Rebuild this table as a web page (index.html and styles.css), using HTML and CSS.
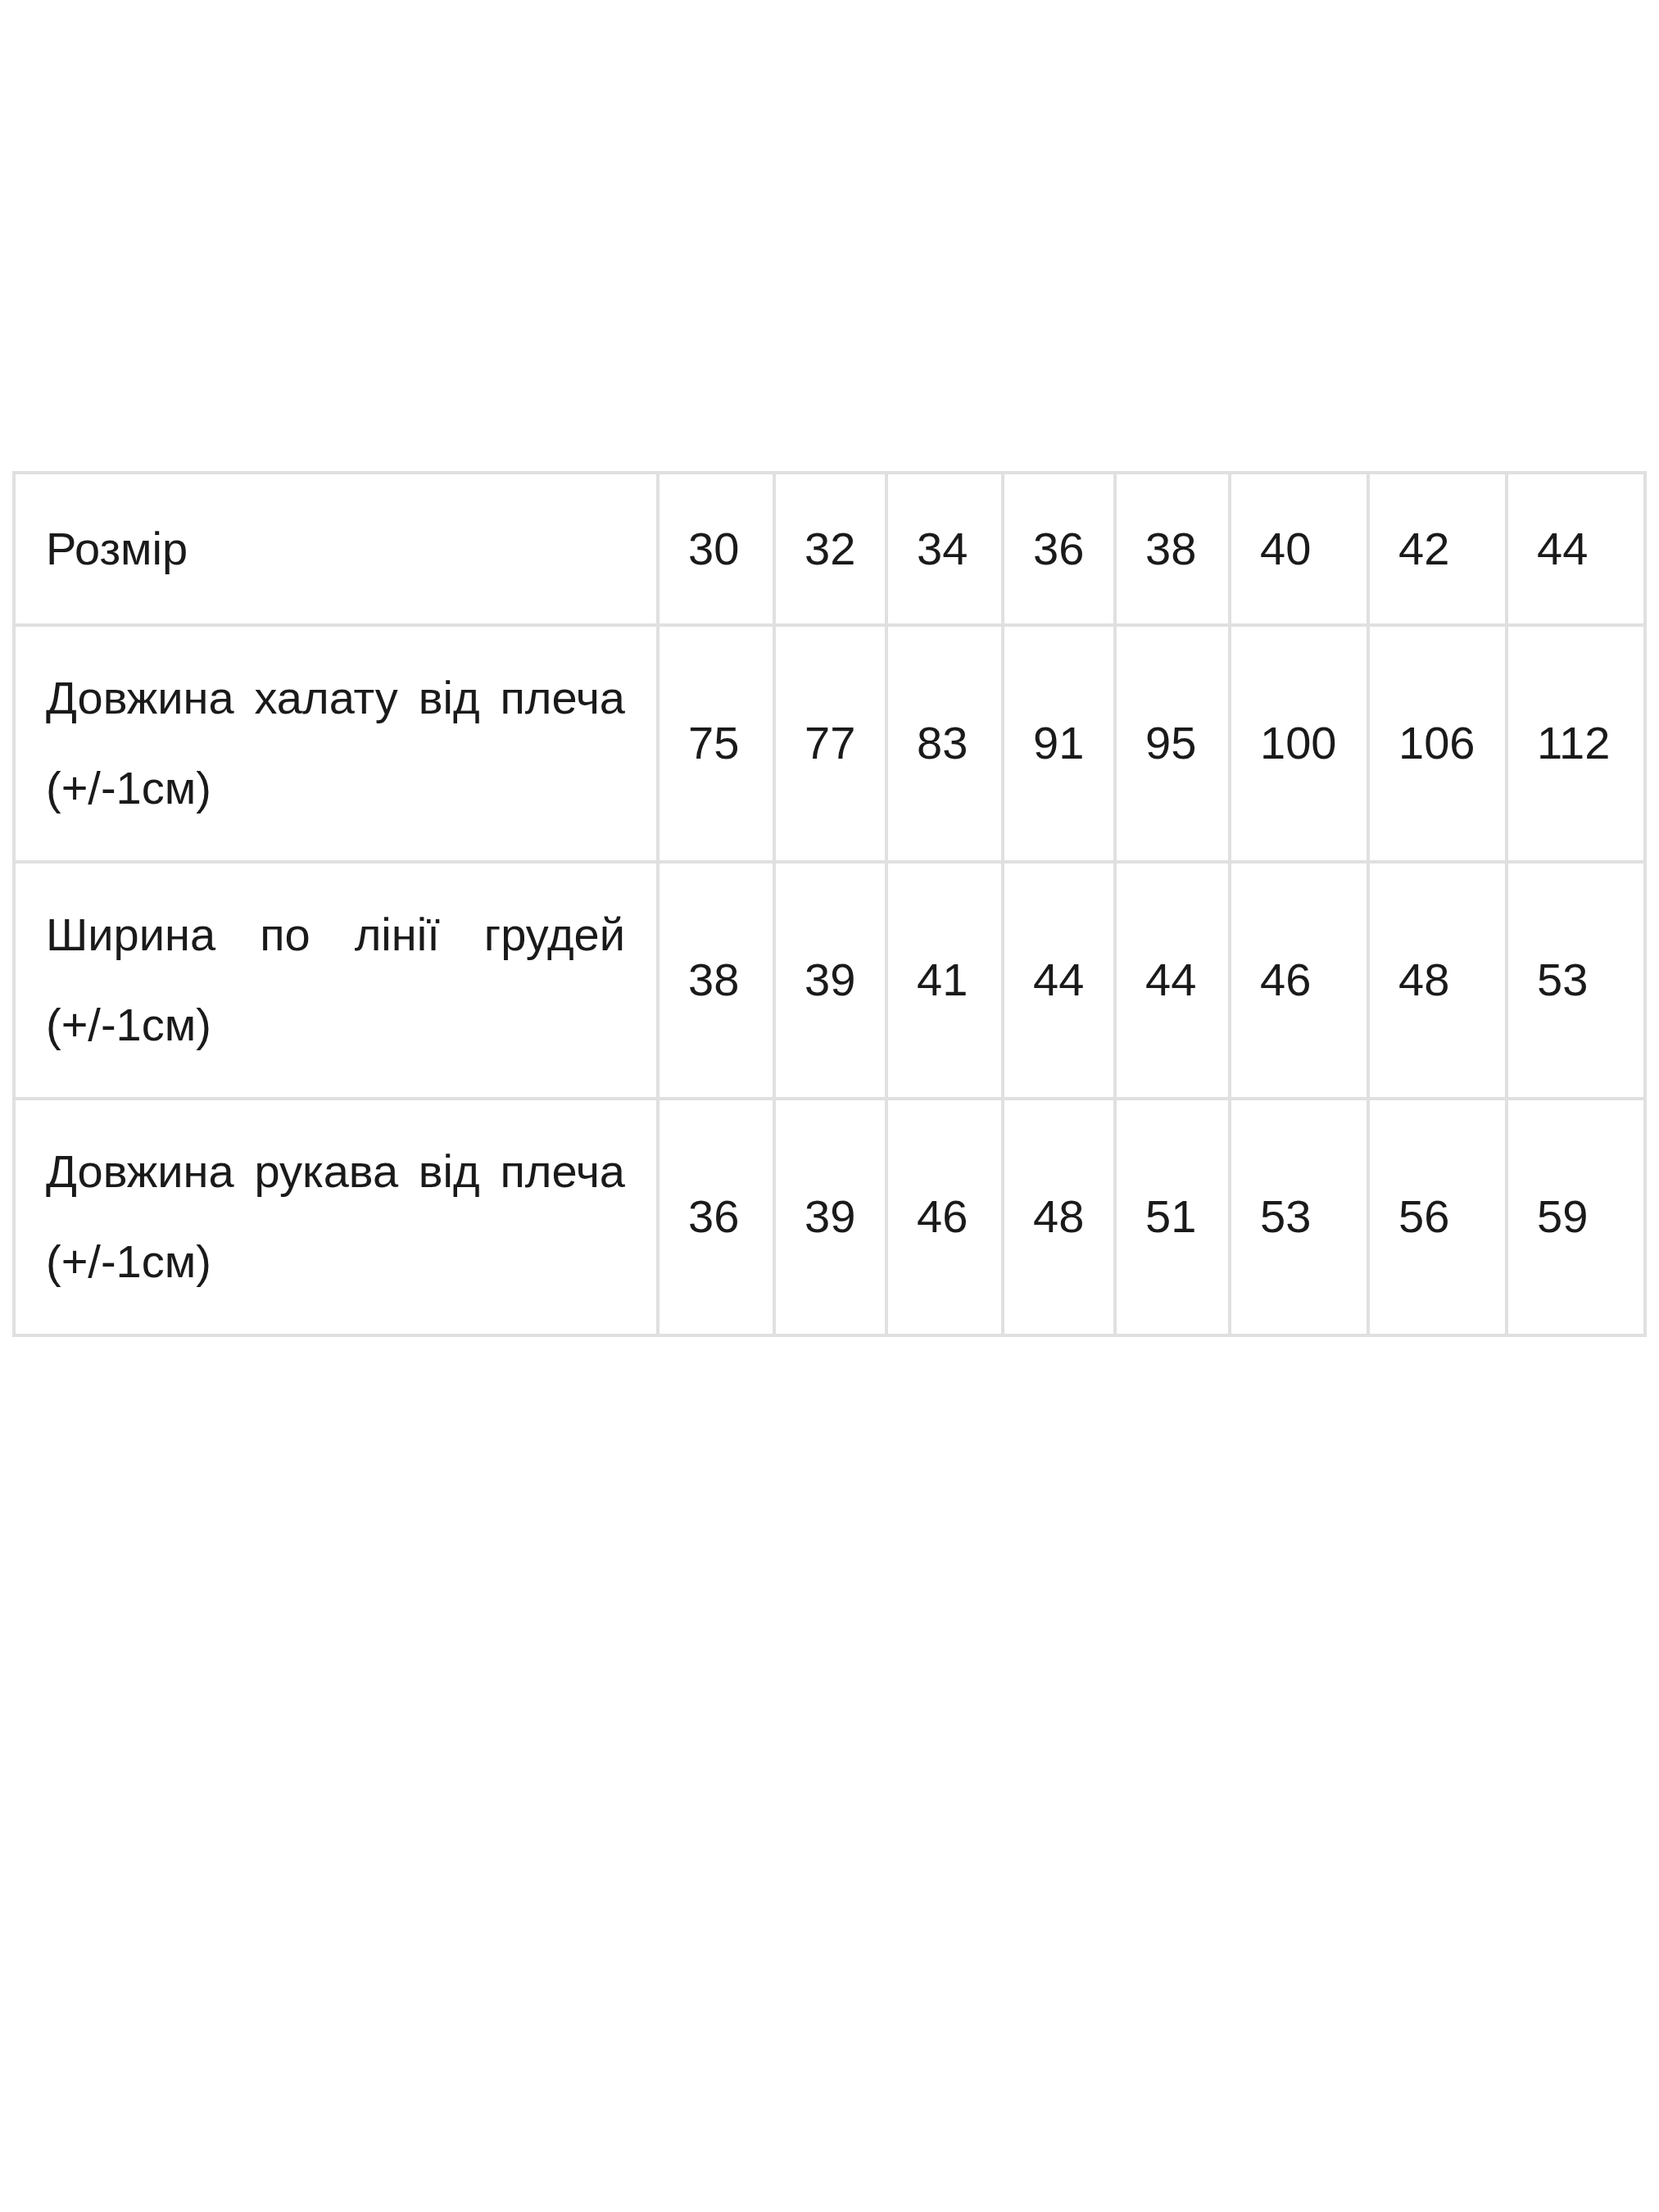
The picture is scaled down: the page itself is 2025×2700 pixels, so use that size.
FILE: index.html
```html
<!DOCTYPE html>
<html lang="uk">
<head>
<meta charset="utf-8">
<title>Розмірна сітка</title>
<link rel="stylesheet" href="styles.css">
</head>
<body>
<table class="size-table">
  <colgroup>
    <col class="c-label">
    <col class="c-a"><col class="c-b"><col class="c-a"><col class="c-b"><col class="c-c">
    <col class="c-d"><col class="c-d"><col class="c-d">
  </colgroup>
  <tbody>
    <tr class="r-head">
      <td class="label">Розмір</td>
      <td>30</td><td>32</td><td>34</td><td>36</td><td>38</td><td>40</td><td>42</td><td>44</td>
    </tr>
    <tr>
      <td class="label">Довжина халату від плеча (+/-1см)</td>
      <td>75</td><td>77</td><td>83</td><td>91</td><td>95</td><td>100</td><td>106</td><td>112</td>
    </tr>
    <tr>
      <td class="label">Ширина по лінії грудей (+/-1см)</td>
      <td>38</td><td>39</td><td>41</td><td>44</td><td>44</td><td>46</td><td>48</td><td>53</td>
    </tr>
    <tr>
      <td class="label">Довжина рукава від плеча (+/-1см)</td>
      <td>36</td><td>39</td><td>46</td><td>48</td><td>51</td><td>53</td><td>56</td><td>59</td>
    </tr>
  </tbody>
</table>
</body>
</html>
```

FILE: styles.css
```css
html, body {
  margin: 0;
  padding: 0;
  background: #ffffff;
}

body {
  padding: 575px 0 0 15px;
  font-family: "Liberation Sans", Arial, sans-serif;
  color: #1a1a1a;
}

.size-table {
  border-collapse: collapse;
  table-layout: fixed;
  width: 1993px;
  font-size: 56px;
  line-height: 110px;
}

.size-table td {
  border: 4px solid #e0e0e0;
  padding: 32px 34px 33px 35px;
  vertical-align: middle;
  text-align: left;
}

.size-table .r-head td {
  padding-top: 36px;
  padding-bottom: 36px;
}

.size-table td.label {
  text-align: justify;
  padding-left: 37px;
  padding-right: 38px;
}

.c-label { width: 786px; }
.c-a { width: 142px; }
.c-b { width: 137px; }
.c-c { width: 140px; }
.c-d { width: 169px; }
```
